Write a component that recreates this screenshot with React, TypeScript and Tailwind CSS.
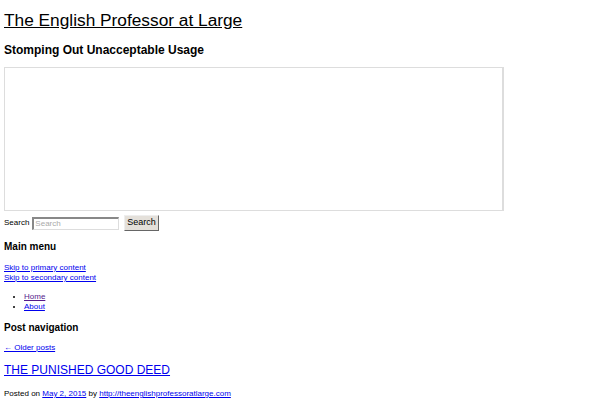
import React from "react";

const App: React.FC = () => {
  return (
    <div className="min-h-screen bg-white px-1 text-black font-['Liberation_Sans',Arial,sans-serif]">
      <h1 className="pt-[9px] text-[17.3px] leading-[22px]">
        <a href="#" className="underline">
          The English Professor at Large
        </a>
      </h1>
      <h2 className="mt-[12px] text-[12px] font-bold leading-[14px]">
        Stomping Out Unacceptable Usage
      </h2>
      <div className="mt-[10px] h-[144px] w-[500px] border border-r-2 border-[#dddddd]" />
      <form className="mt-[4px] flex h-[16px] items-center text-[8px]">
        <label className="mr-[3px]">Search</label>
        <input
          type="text"
          placeholder="Search"
          className="h-[13px] w-[87px] border border-t-2 border-l-2 border-[#888] border-b-[#ddd] border-r-[#ddd] bg-white px-[1px] text-[8px] placeholder:text-[#aaa]"
        />
        <button className="ml-[5px] h-[16px] border border-[#666] border-l-[#eee] border-t-[#eee] bg-[#e4e0da] px-[2px] text-[9px]">
          Search
        </button>
      </form>
      <h3 className="mt-[10px] text-[10px] font-bold leading-[12px]">Main menu</h3>
      <div className="mt-[10px] text-[8px] leading-[10px]">
        <a href="#" className="block text-[#0000ee] underline">
          Skip to primary content
        </a>
        <a href="#" className="block text-[#0000ee] underline">
          Skip to secondary content
        </a>
      </div>
      <ul className="mt-[9px] list-disc pl-[20px] text-[8px] leading-[10px]">
        <li>
          <a href="#" className="text-[#551a8b] underline">
            Home
          </a>
        </li>
        <li>
          <a href="#" className="text-[#0000ee] underline">
            About
          </a>
        </li>
      </ul>
      <h3 className="mt-[10px] text-[10px] font-bold leading-[12px]">Post navigation</h3>
      <div className="mt-[9px] text-[8px] leading-[10px]">
        <a href="#" className="text-[#0000ee] underline">
          ← Older posts
        </a>
      </div>
      <h2 className="mt-[9px] text-[12px] leading-[16px]">
        <a href="#" className="text-[#0000ee] underline">
          THE PUNISHED GOOD DEED
        </a>
      </h2>
      <div className="mt-[11px] text-[8px] leading-[10px]">
        Posted on{" "}
        <a href="#" className="text-[#0000ee] underline">
          May 2, 2015
        </a>{" "}
        by{" "}
        <a href="#" className="text-[#0000ee] underline">
          http://theenglishprofessoratlarge.com
        </a>
      </div>
    </div>
  );
};

export default App;
